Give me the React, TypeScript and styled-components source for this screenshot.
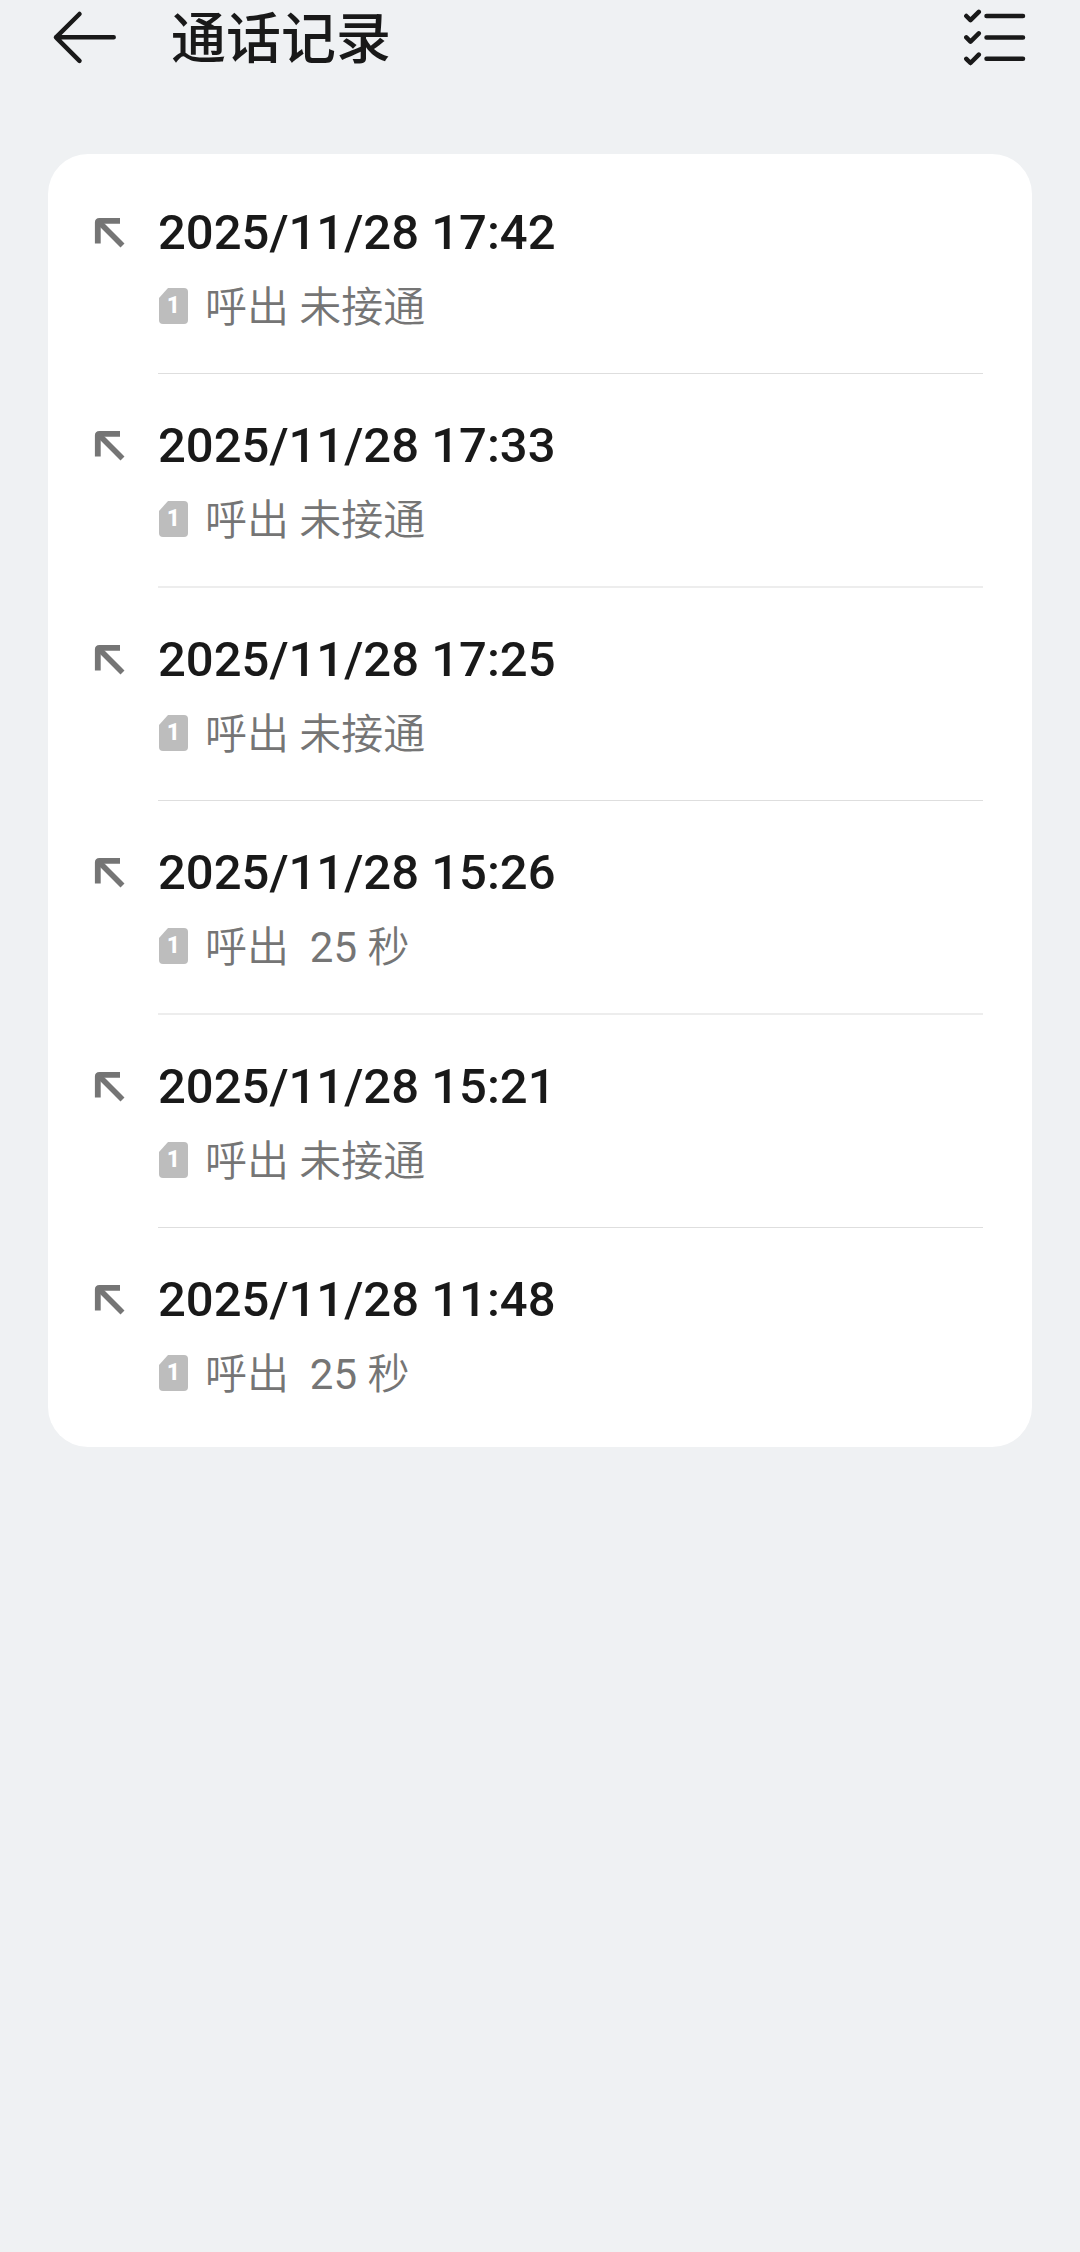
import React from "react";
import styled, { createGlobalStyle } from "styled-components";

const GlobalStyle = createGlobalStyle`
  *, *::before, *::after { box-sizing: border-box; }
  html { background: #eff1f3; }
  body {
    margin: 0;
    color: #191919;
    font-family: Roboto, "Noto Sans CJK SC", sans-serif;
  }
`;

const Page = styled.div`
  min-height: 100vh;
  padding: 0 48px 48px;
`;

const Header = styled.header`
  display: flex;
  align-items: center;
  height: 74px;
  margin-bottom: 80px;
`;

const IconButton = styled.button`
  display: flex;
  flex: none;
  padding: 0;
  border: 0;
  background: none;
  color: inherit;
  cursor: pointer;
`;

const Title = styled.h1`
  flex: 1;
  margin: 0;
  padding: 4px 0 0 50px;
  font-size: 55px;
  font-weight: 500;
  line-height: 74px;
`;

const CallList = styled.ul`
  margin: 0;
  padding: 7px 49px 7px 44px;
  border-radius: 40px;
  background: #fff;
  list-style: none;
`;

const CallRow = styled.li`
  display: flex;
`;

const Direction = styled.span`
  display: flex;
  flex: none;
  align-items: center;
  width: 66px;
  height: 64px;
  margin-top: 40px;
  color: #757575;
`;

const CallBody = styled.div`
  flex: 1;
  min-width: 0;
  padding: 40px 0;
  border-bottom: 1px solid #dedede;

  ${CallRow}:nth-child(even) & {
    border-bottom: 2px solid #ededed;
  }

  ${CallRow}:last-child & {
    border-bottom: 0;
  }
`;

const CallTime = styled.time`
  display: block;
  font-size: 49px;
  font-weight: 500;
  line-height: 64px;
`;

const CallDetail = styled.div`
  display: flex;
  align-items: center;
  gap: 17px;
  height: 56px;
  margin: 13px 0 -1px;
  padding-left: 1px;
  color: #757575;
  font-size: 42px;
  line-height: 52px;
`;

const DetailText = styled.span`
  padding-top: 4px;
  font-weight: 350;
  white-space: pre;
`;

const Duration = styled.span`
  font-weight: 400;
`;

const SimCard = styled.span`
  display: flex;
  flex: none;
  align-items: center;
  justify-content: center;
  width: 29px;
  height: 36px;
  border-radius: 4px;
  background: #bdbdbd;
  clip-path: polygon(9px 0, 100% 0, 100% 100%, 0 100%, 0 10px);
  color: #fff;
  font-size: 23px;
  font-weight: 800;
  line-height: 36px;
`;

const BackIcon = () => (
  <svg width="73" height="60" viewBox="48 7 73 60" fill="none" stroke="currentColor" strokeWidth="4.500" strokeLinecap="round" strokeLinejoin="round" aria-hidden="true">
    <path d="M79.500 14 56 37.300 79.500 60.800M56 37.300H113.700" />
  </svg>
);

const ChecklistIcon = () => (
  <svg width="72" height="60" viewBox="960 7 72 60" fill="none" stroke="currentColor" strokeWidth="4.500" strokeLinecap="round" strokeLinejoin="round" aria-hidden="true">
    {[16, 37.4, 58.8].map((y) => (
      <path key={y} d={`M966.300 ${y}l4.200 4.200 8.300-8.300M986.500 ${y}H1023`} />
    ))}
  </svg>
);

const OutgoingIcon = () => (
  <svg width="36" height="36" viewBox="92 215 36 36" fill="none" stroke="currentColor" aria-hidden="true">
    <path d="M120 220.800H99.500Q97.800 220.800 97.800 222.500V243.500" strokeWidth="5.800" />
    <path d="M98.800 221.800 122.500 245.500" strokeWidth="5.600" />
  </svg>
);

type Call = { time: string; seconds?: number };

const calls: Call[] = [
  { time: "2025/11/28 17:42" },
  { time: "2025/11/28 17:33" },
  { time: "2025/11/28 17:25" },
  { time: "2025/11/28 15:26", seconds: 25 },
  { time: "2025/11/28 15:21" },
  { time: "2025/11/28 11:48", seconds: 25 },
];

export default function App() {
  return (
    <Page>
      <GlobalStyle />
      <Header>
        <IconButton type="button" aria-label="返回">
          <BackIcon />
        </IconButton>
        <Title>通话记录</Title>
        <IconButton type="button" aria-label="多选">
          <ChecklistIcon />
        </IconButton>
      </Header>
      <CallList>
        {calls.map((call) => (
          <CallRow key={call.time}>
            <Direction>
              <OutgoingIcon />
            </Direction>
            <CallBody>
              <CallTime>{call.time}</CallTime>
              <CallDetail>
                <SimCard>1</SimCard>
                <DetailText>
                  {call.seconds ? (
                    <>
                      {"呼出"}
                      <Duration>{`  ${call.seconds} `}</Duration>
                      {"秒"}
                    </>
                  ) : (
                    "呼出 未接通"
                  )}
                </DetailText>
              </CallDetail>
            </CallBody>
          </CallRow>
        ))}
      </CallList>
    </Page>
  );
}
